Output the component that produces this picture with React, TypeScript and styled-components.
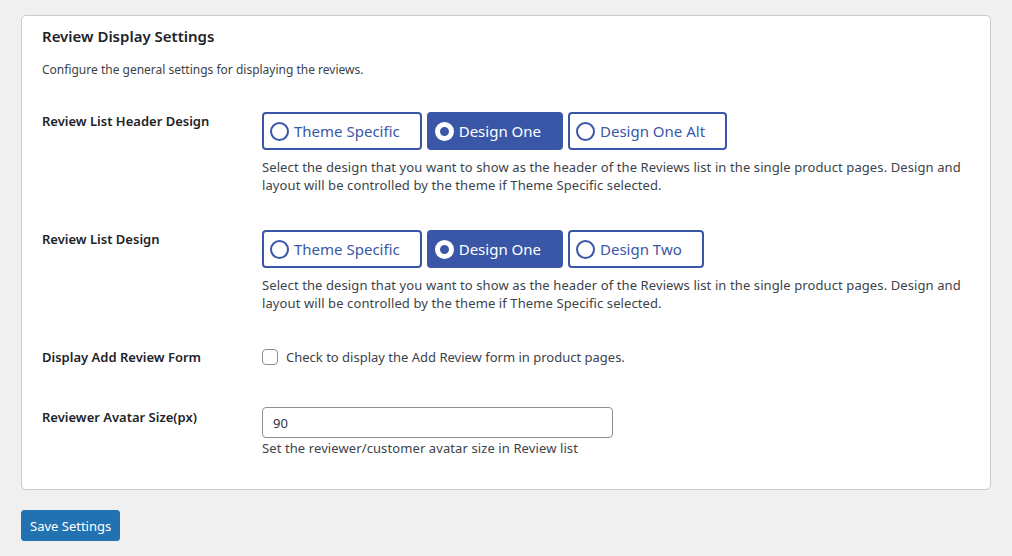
import React, { useState } from 'react';
import styled, { createGlobalStyle } from 'styled-components';

const GlobalStyle = createGlobalStyle`
  body {
    margin: 0;
    background: #f0f0f1;
    font-family: "Noto Sans", "Open Sans", sans-serif;
    font-size: 13px;
    color: #3c434a;
  }
`;

const Page = styled.div`
  padding: 15px 21px 16px 21px;
`;

const Card = styled.div`
  background: #fff;
  border: 1px solid #c9cacd;
  border-radius: 5px;
  padding: 9px 20px 32px 20px;
`;

const Title = styled.h2`
  margin: 0;
  font-size: 15px;
  font-weight: 600;
  color: #1d2327;
  line-height: 22px;
`;

const Intro = styled.p`
  margin: 14px 0 0 0;
  font-size: 12px;
  line-height: 18px;
  color: #3c434a;
`;

const FormTable = styled.div`
  display: flex;
  flex-direction: column;
  margin-top: 32px;
`;

const Row = styled.div<{ $pad?: number }>`
  display: grid;
  grid-template-columns: 220px 1fr;
  padding-bottom: ${(p) => p.$pad ?? 35}px;
`;

const Label = styled.div`
  font-size: 13px;
  font-weight: 600;
  color: #1d2327;
  line-height: 20px;
`;

const Field = styled.div`
  display: flex;
  flex-direction: column;
`;

const Segments = styled.div`
  display: flex;
  gap: 5px;
  margin-top: 1px;
`;

const Segment = styled.button<{ $active: boolean }>`
  box-sizing: border-box;
  display: flex;
  align-items: center;
  gap: 5px;
  height: 38px;
  padding: 0 20px 0 6px;
  border: 2px solid #3a57a7;
  border-radius: 4px;
  background: ${(p) => (p.$active ? '#3a57a7' : '#fff')};
  color: ${(p) => (p.$active ? '#fff' : '#3a57a7')};
  font-family: inherit;
  font-size: 15px;
  cursor: pointer;
`;

const Dot = styled.span<{ $active: boolean }>`
  box-sizing: border-box;
  width: 19px;
  height: 19px;
  border-radius: 50%;
  border: ${(p) => (p.$active ? '5px solid #fff' : '2px solid #3a57a7')};
  background: ${(p) => (p.$active ? '#3a57a7' : '#fff')};
  flex-shrink: 0;
`;

const Help = styled.p`
  margin: 8px 0 0 0;
  font-size: 13px;
  line-height: 18px;
  letter-spacing: 0.1px;
  color: #3c434a;
`;

const CheckLine = styled.label`
  display: flex;
  align-items: center;
  gap: 8px;
  font-size: 13px;
  color: #3c434a;
  line-height: 20px;
`;

const Checkbox = styled.span`
  width: 14px;
  height: 14px;
  border: 1px solid #8c8f94;
  border-radius: 4px;
  background: #fff;
`;

const TextInput = styled.input`
  box-sizing: border-box;
  width: 351px;
  height: 31px;
  padding: 0 10px;
  border: 1px solid #8c8f94;
  border-radius: 4px;
  font-family: inherit;
  font-size: 13px;
  color: #2c3338;
`;

const HelpSmall = styled(Help)`
  margin-top: 1px;
`;

const SaveButton = styled.button`
  margin-top: 20px;
  height: 31px;
  padding: 0 8px;
  background: #2271b1;
  border: 1px solid #2271b1;
  border-radius: 3px;
  color: #fff;
  font-family: inherit;
  font-size: 13px;
  cursor: pointer;
`;

const helpText =
  'Select the design that you want to show as the header of the Reviews list in the single product pages. Design and layout will be controlled by the theme if Theme Specific selected.';

function SegmentGroup({ options, value, onChange }: { options: string[]; value: string; onChange: (v: string) => void }) {
  return (
    <Segments>
      {options.map((o) => (
        <Segment key={o} type="button" $active={o === value} onClick={() => onChange(o)}>
          <Dot $active={o === value} />
          {o}
        </Segment>
      ))}
    </Segments>
  );
}

export default function App() {
  const [header, setHeader] = useState('Design One');
  const [list, setList] = useState('Design One');

  return (
    <Page>
      <GlobalStyle />
      <Card>
        <Title>Review Display Settings</Title>
        <Intro>Configure the general settings for displaying the reviews.</Intro>
        <FormTable>
          <Row>
            <Label>Review List Header Design</Label>
            <Field>
              <SegmentGroup options={['Theme Specific', 'Design One', 'Design One Alt']} value={header} onChange={setHeader} />
              <Help>{helpText}</Help>
            </Field>
          </Row>
          <Row>
            <Label>Review List Design</Label>
            <Field>
              <SegmentGroup options={['Theme Specific', 'Design One', 'Design Two']} value={list} onChange={setList} />
              <Help>{helpText}</Help>
            </Field>
          </Row>
          <Row $pad={40}>
            <Label>Display Add Review Form</Label>
            <Field>
              <CheckLine>
                <Checkbox />
                Check to display the Add Review form in product pages.
              </CheckLine>
            </Field>
          </Row>
          <Row $pad={0}>
            <Label>Reviewer Avatar Size(px)</Label>
            <Field>
              <TextInput defaultValue="90" />
              <HelpSmall>Set the reviewer/customer avatar size in Review list</HelpSmall>
            </Field>
          </Row>
        </FormTable>
      </Card>
      <SaveButton>Save Settings</SaveButton>
    </Page>
  );
}
